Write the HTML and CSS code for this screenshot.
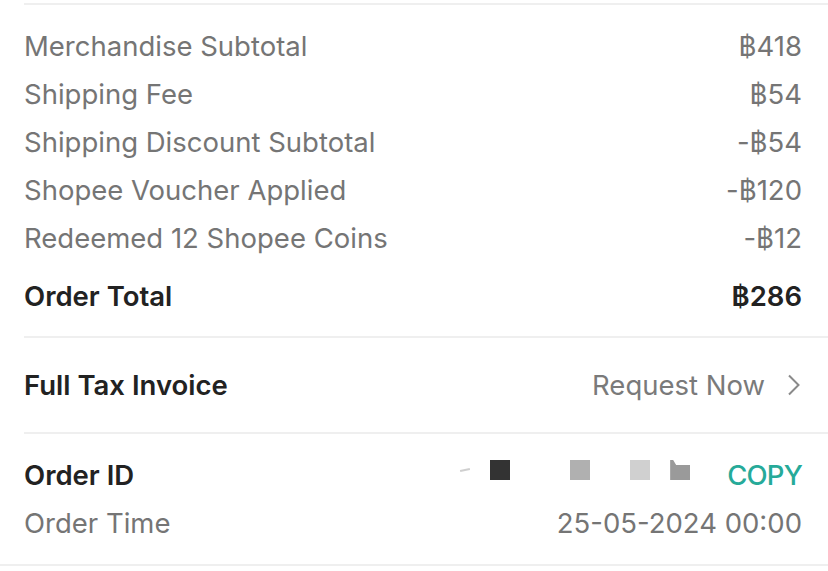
FILE: index.html
```html
<!DOCTYPE html>
<html>
<head>
<meta charset="utf-8">
<link rel="stylesheet" href="styles.css">
</head>
<body>
<div class="page">
  <div class="section summary">
    <div class="row"><span class="label">Merchandise Subtotal</span><span class="value">฿418</span></div>
    <div class="row"><span class="label">Shipping Fee</span><span class="value">฿54</span></div>
    <div class="row"><span class="label">Shipping Discount Subtotal</span><span class="value">-฿54</span></div>
    <div class="row"><span class="label">Shopee Voucher Applied</span><span class="value">-฿120</span></div>
    <div class="row"><span class="label">Redeemed 12 Shopee Coins</span><span class="value">-฿12</span></div>
    <div class="row total"><span class="label strong">Order Total</span><span class="value strong">฿286</span></div>
  </div>
  <div class="section invoice">
    <div class="row"><span class="label strong">Full Tax Invoice</span>
      <span class="value link">Request Now
        <svg class="chev" width="14" height="22" viewBox="0 0 14 22"><path d="M2 1.5 L11.5 11 L2 20.5" fill="none" stroke="#8a8a8a" stroke-width="2"/></svg>
      </span>
    </div>
  </div>
  <div class="order-wrap">
    <div class="section order">
      <div class="row"><span class="label strong">Order ID</span>
        <span class="value idval">
          <span class="blur b0"></span>
          <span class="blur b1"></span>
          <span class="blur b2"></span>
          <span class="blur b3"></span>
          <span class="blur b4"></span>
          <span class="copy">COPY</span>
        </span>
      </div>
      <div class="row"><span class="label">Order Time</span><span class="value">25-05-2024 00:00</span></div>
    </div>
  </div>
</div>
</body>
</html>
```
FILE: styles.css
```css
* { box-sizing: border-box; }
body {
  margin: 0;
  background: #fff;
  font-family: Inter, "Noto Sans", sans-serif;
  font-size: 27.5px;
  color: #757575;
}
.page {
  width: 828px;
  height: 571px;
  overflow: hidden;
}
.section {
  margin-left: 24px;
  padding-right: 26px;
  border-top: 2px solid #efefef;
}
.summary { margin-top: 3px; padding-top: 17px; padding-bottom: 16px; }
.invoice { padding-top: 23px; padding-bottom: 23px; }
.order { padding-top: 17px; padding-bottom: 17px; }
.order-wrap { border-bottom: 2px solid #efefef; }
.row {
  display: flex;
  justify-content: space-between;
  align-items: center;
  height: 48px;
  line-height: 48px;
}
.total { margin-top: 10px; }
.strong { color: #222; font-weight: 600; }
.value { display: flex; align-items: center; }
.link { color: #7a7a7a; }
.chev { margin-left: 22px; margin-right: 1px; }
.blur { display: inline-block; width: 20px; height: 20px; margin-top: -10px; }
.b0 { width: 10px; height: 2px; background: #cfcfcf; margin-right: 20px; transform: rotate(-12deg); }
.b1 { background: #333; margin-right: 60px; }
.b2 { background: #b0b0b0; margin-right: 40px; }
.b3 { background: #d0d0d0; margin-right: 20px; }
.b4 { background: #9a9a9a; margin-right: 37px; clip-path: polygon(0 0, 3px 0, 6px 5px, 100% 5px, 100% 100%, 0 100%); }
.copy { color: #26aa99; font-weight: 500; letter-spacing: -0.8px; }
```
